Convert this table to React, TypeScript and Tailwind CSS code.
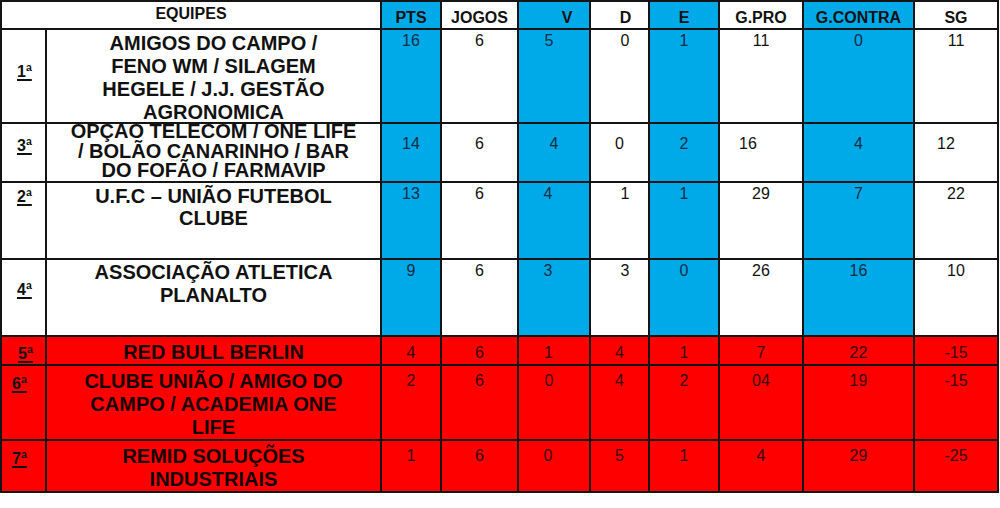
import React from 'react';

type Row = {
  pos: string;
  team: string[];
  stats: string[];
  red?: boolean;
  ordPad: string;
  ordLeft: string;
  teamPad: string;
  teamLh: string;
  numPad: string;
  shift?: Record<number, string>;
};

const rows: Row[] = [
  {
    pos: '1ª',
    team: ['AMIGOS DO CAMPO /', 'FENO WM / SILAGEM', 'HEGELE / J.J. GESTÃO', 'AGRONOMICA'],
    stats: ['16', '6', '5', '0', '1', '11', '0', '11'],
    ordPad: 'pt-[30px]',
    ordLeft: 'pl-[15px]',
    teamPad: 'pt-[2px]',
    teamLh: 'leading-[23px]',
    numPad: 'pt-[2px]',
    shift: { 2: 'pr-[10px]', 3: 'pl-[11px]' },
  },
  {
    pos: '3ª',
    team: ['OPÇAO TELECOM / ONE LIFE', '/ BOLÃO CANARINHO / BAR', 'DO FOFÃO / FARMAVIP'],
    stats: ['14', '6', '4', '0', '2', '16', '4', '12'],
    ordPad: 'pt-[10px]',
    ordLeft: 'pl-[15px]',
    teamPad: '-mt-[2px]',
    teamLh: 'leading-[19.5px]',
    numPad: 'pt-[11px]',
    shift: { 5: 'pr-[26px]', 7: 'pr-[20px]' },
  },
  {
    pos: '2ª',
    team: ['U.F.C – UNIÃO FUTEBOL', 'CLUBE'],
    stats: ['13', '6', '4', '1', '1', '29', '7', '22'],
    ordPad: 'pt-[2px]',
    ordLeft: 'pl-[15px]',
    teamPad: 'pt-[2px]',
    teamLh: 'leading-[22px]',
    numPad: 'pt-[2px]',
    shift: { 2: 'pr-[12px]', 3: 'pl-[11px]' },
  },
  {
    pos: '4ª',
    team: ['ASSOCIAÇÃO ATLETICA', 'PLANALTO'],
    stats: ['9', '6', '3', '3', '0', '26', '16', '10'],
    ordPad: 'pt-[18px]',
    ordLeft: 'pl-[15px]',
    teamPad: 'pt-[1px]',
    teamLh: 'leading-[23px]',
    numPad: 'pt-[2px]',
    shift: { 2: 'pr-[12px]', 3: 'pl-[11px]' },
  },
  {
    pos: '5ª',
    team: ['RED BULL BERLIN'],
    stats: ['4', '6', '1', '4', '1', '7', '22', '-15'],
    red: true,
    ordPad: 'pt-[5px]',
    ordLeft: 'pl-[16px]',
    teamPad: 'pt-[4px]',
    teamLh: 'leading-[23px]',
    numPad: 'pt-[7px]',
    shift: { 2: 'pr-[11px]' },
  },
  {
    pos: '6ª',
    team: ['CLUBE UNIÃO / AMIGO DO', 'CAMPO / ACADEMIA ONE', 'LIFE'],
    stats: ['2', '6', '0', '4', '2', '04', '19', '-15'],
    red: true,
    ordPad: 'pt-[6px]',
    ordLeft: 'pl-[10px]',
    teamPad: 'pt-[4px]',
    teamLh: 'leading-[23px]',
    numPad: 'pt-[6px]',
    shift: { 2: 'pr-[10px]' },
  },
  {
    pos: '7ª',
    team: ['REMID SOLUÇÕES', 'INDUSTRIAIS'],
    stats: ['1', '6', '0', '5', '1', '4', '29', '-25'],
    red: true,
    ordPad: 'pt-[6px]',
    ordLeft: 'pl-[10px]',
    teamPad: 'pt-[4px]',
    teamLh: 'leading-[23px]',
    numPad: 'pt-[6px]',
    shift: { 2: 'pr-[12px]' },
  },
];

const headers = [
  { label: 'PTS', blue: true, cls: '' },
  { label: 'JOGOS', blue: false, cls: '' },
  { label: 'V', blue: true, cls: 'pl-[26px]' },
  { label: 'D', blue: false, cls: 'pl-[12px]' },
  { label: 'E', blue: true, cls: '' },
  { label: 'G.PRO', blue: false, cls: '' },
  { label: 'G.CONTRA', blue: true, cls: '' },
  { label: 'SG', blue: false, cls: '' },
];

const cell = 'border-r-2 border-b-2 border-[#141414]';

export default function App() {
  return (
    <div className="h-[508px] w-[1000px] bg-white font-['Liberation_Sans',Arial,sans-serif] text-[#111]">
      <div className="grid w-[999px] grid-cols-[45px_335px_60px_77px_72px_59px_70px_84px_111px_84px] grid-rows-[28px_94px_59px_77px_77px_29px_75px_52px] border-l-2 border-t-2 border-[#141414]">
        {/* header */}
        <div className={`${cell} col-span-2 bg-white pt-[3px] text-center text-[16px] leading-[18px] font-bold`}>
          EQUIPES
        </div>
        {headers.map((h) => (
          <div
            key={h.label}
            className={`${cell} ${h.blue ? 'bg-[#00a9e8]' : 'bg-white'} ${h.cls} pt-[7px] text-center text-[16px] leading-[18px] font-bold`}
          >
            {h.label}
          </div>
        ))}

        {/* rows */}
        {rows.map((r) => (
          <React.Fragment key={r.pos}>
            <div className={`${cell} ${r.red ? 'bg-[#ff0000]' : 'bg-white'} ${r.ordPad} ${r.ordLeft}`}>
              <span className="text-[16px] leading-[18px] font-bold underline decoration-2 underline-offset-[2px]">
                {r.pos}
              </span>
            </div>
            <div className={`${cell} ${r.red ? 'bg-[#ff0000] text-[#140000]' : 'bg-white'} ${r.teamPad === '-mt-[2px]' ? '' : r.teamPad}`}>
              <div
                className={`${r.teamPad === '-mt-[2px]' ? '-mt-[2px]' : ''} text-center text-[20px] font-bold whitespace-nowrap ${r.teamLh}`}
              >
                {r.team.map((t) => (
                  <div key={t}>{t}</div>
                ))}
              </div>
            </div>
            {r.stats.map((s, i) => {
              const blue = i % 2 === 0;
              const bg = r.red
                ? 'bg-[#ff0000] text-[#3a0000]'
                : blue
                  ? 'bg-[#00a9e8] text-[#0f2d47]'
                  : 'bg-white text-[#111]';
              return (
                <div
                  key={i}
                  className={`${cell} ${bg} ${r.numPad} ${r.shift?.[i] ?? ''} text-center text-[16px] leading-[18px]`}
                >
                  {s}
                </div>
              );
            })}
          </React.Fragment>
        ))}
      </div>
    </div>
  );
}
